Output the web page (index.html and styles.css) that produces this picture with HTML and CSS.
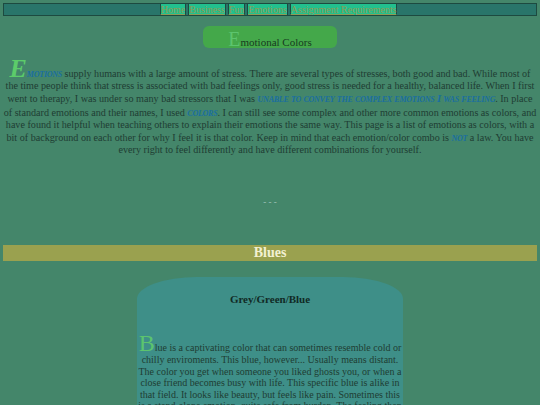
FILE: index.html
```html
<!DOCTYPE html>
<html>
<head>
<meta charset="utf-8">
<link rel="stylesheet" href="styles.css">
</head>
<body>
<nav class="nav">
  <a class="nav-item" href="#">Home</a>
  <a class="nav-item" href="#">Business</a>
  <a class="nav-item" href="#">Fun</a>
  <a class="nav-item" href="#">Emotions</a>
  <a class="nav-item" href="#">Assignment Requirements</a>
</nav>
<div class="title-wrap">
  <h1 class="title"><span class="title-cap">E</span>motional Colors</h1>
</div>
<p class="intro"><span class="drop">E</span><span class="sc">motions</span> supply humans with a large amount of stress. There are several types of stresses, both good and bad. While most of the time people think that stress is associated with bad feelings only, good stress is needed for a healthy, balanced life. When I first went to therapy, I was under so many bad stressors that I was <span class="sc">unable to convey the complex emotions I was feeling</span>. In place of standard emotions and their names, I used <span class="sc">colors</span>. I can still see some complex and other more common emotions as colors, and have found it helpful when teaching others to explain their emotions the same way. This page is a list of emotions as colors, with a bit of background on each other for why I feel it is that color. Keep in mind that each emotion/color combo is <span class="sc">not</span> a law. You have every right to feel differently and have different combinations for yourself.</p>
<div class="sep">- - -</div>
<h2 class="section">Blues</h2>
<div class="card">
  <h3 class="card-title">Grey/Green/Blue</h3>
  <p class="card-text"><span class="card-cap">B</span>lue is a captivating color that can sometimes resemble cold or chilly enviroments. This blue, however... Usually means distant. The color you get when someone you liked ghosts you, or when a close friend becomes busy with life. This specific blue is alike in that field. It looks like beauty, but feels like pain. Sometimes this is a stand-alone emotion, quite safe from burden. The feeling then stays with you for a while.</p>
</div>
</body>
</html>
```
FILE: styles.css
```css
html, body {
  margin: 0;
  padding: 0;
}
body {
  background: #44866a;
  font-family: "Liberation Serif", serif;
  font-size: 10px;
  color: #1f3d33;
  padding: 3px 3px 0 3px;
  overflow: hidden;
  height: 402px;
}
.nav {
  height: 11px;
  background: #29756a;
  border: 1px solid #1d4a40;
  display: flex;
  justify-content: center;
  padding-left: 17px;
}
.nav-item {
  display: block;
  background: #22c08e;
  color: #8f9a55;
  border: 1px solid #1d4a40;
  border-top: 0;
  border-bottom: 0;
  font-size: 10px;
  line-height: 11px;
  padding: 0;
  margin: 0 1px;
  text-decoration: underline;
}
.title-wrap {
  display: flex;
  justify-content: center;
  margin-top: 10px;
}
.title {
  margin: 0;
  width: 134px;
  height: 22px;
  background: #44a84a;
  border-radius: 6px;
  font-weight: normal;
  font-size: 11px;
  color: #163a20;
  text-align: center;
  line-height: 26px;
}
.title-cap {
  font-size: 20px;
  color: #5cc46e;
}
.intro {
  margin: 12px 0 0 0;
  text-align: center;
  font-size: 10.15px;
  line-height: 12.2px;
}
.drop {
  font-size: 26px;
  line-height: 18px;
  font-style: italic;
  font-weight: bold;
  color: #5ccc6a;
}
.sc {
  font-style: italic;
  font-weight: bold;
  font-variant: small-caps;
  font-size: 1.06em;
  letter-spacing: -0.25px;
  color: #1a6ea0;
}
.sep {
  text-align: center;
  color: #a8c8c0;
  font-size: 9px;
  margin-top: 41px;
}
.section {
  margin: 38px 0 0 0;
  height: 16px;
  background: #9aa14f;
  color: #f2f0d2;
  font-size: 14px;
  line-height: 16px;
  text-align: center;
}
.card {
  margin: 16px 0 0 134px;
  width: 266px;
  height: 200px;
  background: #3e8f88;
  border-radius: 60px 60px 0 0 / 22px 22px 0 0;
  padding-top: 16px;
  box-sizing: border-box;
}
.card-title {
  margin: 0;
  font-size: 11px;
  text-align: center;
  color: #112a25;
}
.card-text {
  margin: 30px 0 0 0;
  text-align: center;
  line-height: 11.6px;
  color: #1f3d33;
}
.card-cap {
  font-size: 24px;
  line-height: 16px;
  color: #5cc46e;
}
```
